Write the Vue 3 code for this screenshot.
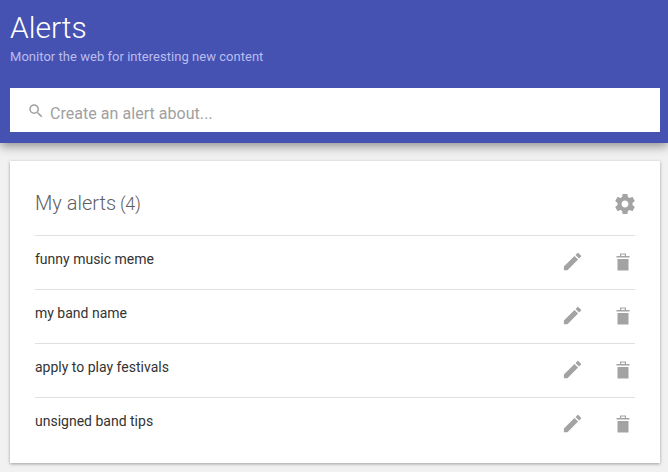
<script setup>
const alerts = [
  'funny music meme',
  'my band name',
  'apply to play festivals',
  'unsigned band tips'
]
</script>

<template>
  <div class="page">
    <header class="top">
      <h1>Alerts</h1>
      <p class="sub">Monitor the web for interesting new content</p>
      <div class="search">
        <svg class="search-icon" viewBox="0 0 24 24" width="18" height="18">
          <path d="M15.5 14h-.79l-.28-.27A6.47 6.47 0 0 0 16 9.5 6.5 6.5 0 1 0 9.5 16c1.61 0 3.09-.59 4.23-1.57l.27.28v.79l5 4.99L20.49 19l-4.99-5zm-6 0C7.01 14 5 11.99 5 9.5S7.01 5 9.5 5 14 7.01 14 9.5 11.99 14 9.5 14z" />
        </svg>
        <span class="placeholder">Create an alert about...</span>
      </div>
    </header>

    <section class="card">
      <div class="card-head">
        <h2>My alerts <span class="count">(4)</span></h2>
        <svg class="icon gear" viewBox="0 0 24 24" width="24" height="24">
          <path d="M19.43 12.98c.04-.32.07-.64.07-.98s-.03-.66-.07-.98l2.11-1.65c.19-.15.24-.42.12-.64l-2-3.46c-.12-.22-.39-.3-.61-.22l-2.49 1c-.52-.4-1.08-.73-1.69-.98l-.38-2.65A.49.49 0 0 0 14 2h-4c-.25 0-.46.18-.49.42l-.38 2.65c-.61.25-1.17.59-1.69.98l-2.49-1c-.23-.09-.49 0-.61.22l-2 3.46c-.13.22-.07.49.12.64l2.11 1.65c-.04.32-.07.65-.07.98s.03.66.07.98l-2.11 1.65c-.19.15-.24.42-.12.64l2 3.46c.12.22.39.3.61.22l2.49-1c.52.4 1.08.73 1.69.98l.38 2.65c.03.24.24.42.49.42h4c.25 0 .46-.18.49-.42l.38-2.65c.61-.25 1.17-.59 1.69-.98l2.49 1c.23.09.49 0 .61-.22l2-3.46c.12-.22.07-.49-.12-.64l-2.11-1.65zM12 15.5c-1.93 0-3.5-1.57-3.5-3.5s1.57-3.5 3.5-3.5 3.5 1.57 3.5 3.5-1.57 3.5-3.5 3.5z" />
        </svg>
      </div>
      <ul class="list">
        <li v-for="alert in alerts" :key="alert" class="row">
          <span class="name">{{ alert }}</span>
          <svg class="icon pencil" viewBox="0 0 24 24" width="23" height="23">
            <path d="M3 17.25V21h3.75L17.81 9.94l-3.75-3.75L3 17.25zM20.71 7.04a1 1 0 0 0 0-1.41l-2.34-2.34a1 1 0 0 0-1.41 0l-1.83 1.83 3.75 3.75 1.83-1.83z" />
          </svg>
          <svg class="icon trash" viewBox="0 0 24 24" width="24" height="24">
            <path fill-rule="evenodd" d="M9 3.5h6V6h3.5v1.6h-13V6H9V3.5zM10.2 4.6V6h3.6V4.6h-3.6zM6.5 9h11v11.5h-11z" />
          </svg>
        </li>
      </ul>
    </section>
  </div>
</template>

<style>
html, body {
  margin: 0;
  background: #f1f1f1;
}
</style>

<style scoped>
.page {
  height: 472px;
  overflow: hidden;
  background: #f1f1f1;
  font-family: Roboto, "Liberation Sans", sans-serif;
}
.top {
  height: 143px;
  box-sizing: border-box;
  padding: 10px 8px 0 10px;
  background: #4652b2;
  box-shadow: 0 3px 10px rgba(0, 0, 0, 0.42);
}
h1 {
  margin: 0;
  font-size: 30px;
  line-height: 36px;
  font-weight: 300;
  color: #fff;
}
.sub {
  margin: 2px 0 0;
  font-size: 13px;
  line-height: 18px;
  font-weight: 400;
  letter-spacing: 0.03px;
  color: #b9bdf0;
}
.search {
  display: flex;
  align-items: center;
  height: 44px;
  margin-top: 22px;
  padding-left: 17px;
  background: #fff;
  font-size: 16px;
  color: #a0a0a0;
}
.search-icon {
  fill: #a0a0a0;
  margin-right: 5px;
  margin-top: 2px;
}
.placeholder {
  padding-top: 6px;
  letter-spacing: 0.04px;
}
.card {
  margin: 18px 8px 0 10px;
  height: 302px;
  box-sizing: border-box;
  padding: 0 25px;
  background: #fff;
  box-shadow: 0 1px 3px rgba(0, 0, 0, 0.35);
}
.card-head {
  display: flex;
  align-items: center;
  justify-content: space-between;
  height: 62px;
  padding-top: 12px;
  border-bottom: 1px solid #e0e0e0;
}
h2 {
  margin: 0 0 2px;
  font-size: 20px;
  font-weight: 300;
  color: #5f5f5f;
}
.count {
  margin-left: -1px;
  font-size: 18px;
  letter-spacing: -0.3px;
}
.icon {
  fill: #a3a3a3;
  flex: none;
}
.gear {
  margin-right: -2px;
}
.list {
  margin: 0;
  padding: 0;
  list-style: none;
}
.row {
  display: flex;
  align-items: center;
  height: 53px;
  border-bottom: 1px solid #e0e0e0;
}
.row:last-child {
  border-bottom: 0;
}
.name {
  flex: 1;
  margin-bottom: 8px;
  font-size: 14px;
  color: #333;
}
.pencil {
  margin-right: 27px;
  margin-bottom: 3px;
}
.trash {
  margin-bottom: 2px;
}
</style>
